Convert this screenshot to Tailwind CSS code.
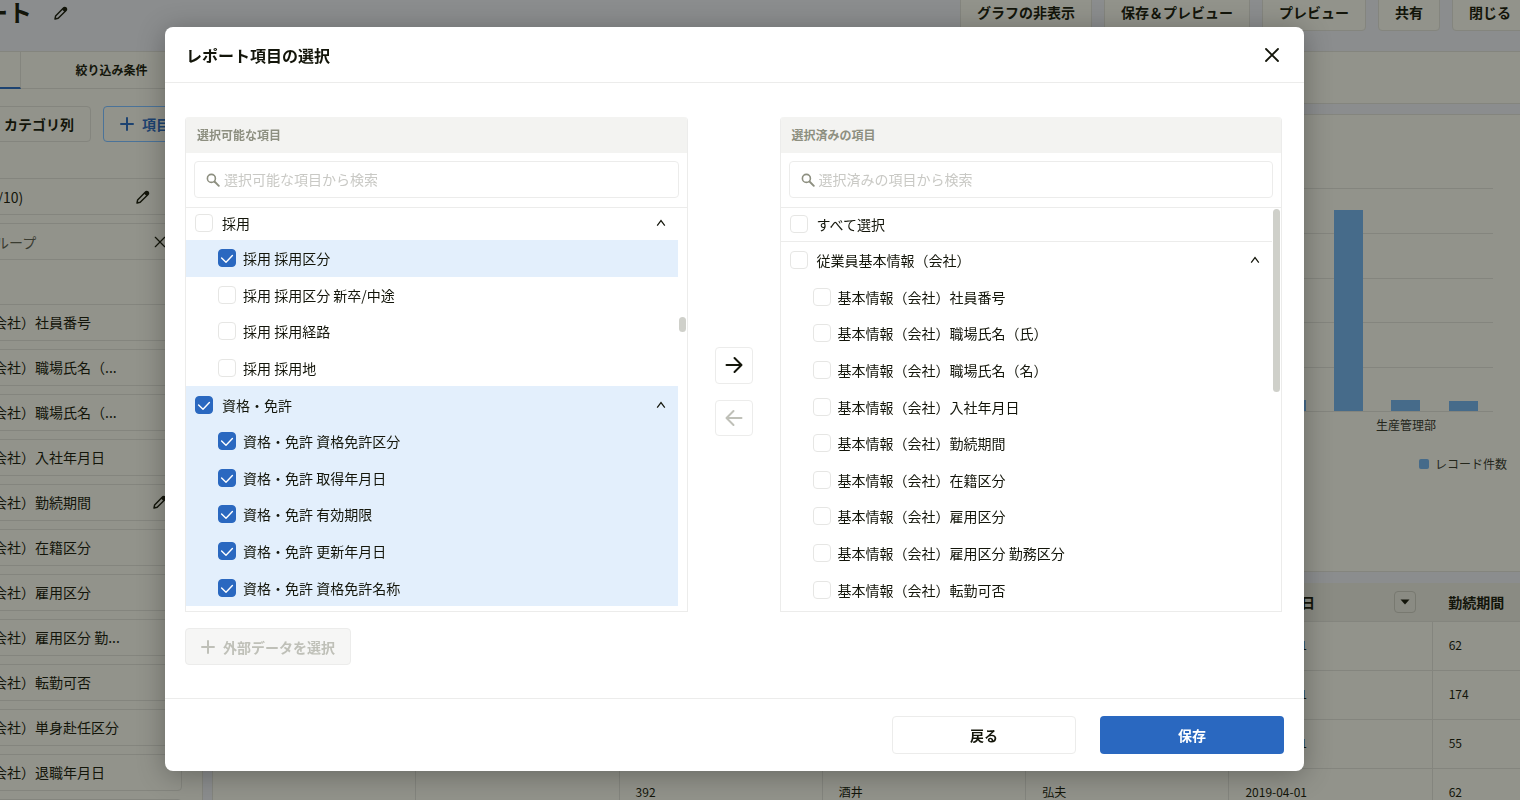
<!DOCTYPE html>
<html lang="ja">
<head>
<meta charset="utf-8">
<title>レポート項目の選択</title>
<script src="https://cdn.jsdelivr.net/npm/@tailwindcss/browser@4"></script>
</head>
<body class="h-screen overflow-hidden bg-[#8b8d8e] font-['Noto_Sans_CJK_JP',sans-serif] text-sm text-[#13150a]">

<svg class="hidden">
  <symbol id="pencil" viewBox="0 0 14 14"><path d="M1 13 L1.6 10 L9.2 2.2 Q10.6 .8 12 2 Q13.2 3.4 11.8 4.8 L4.2 12.3 Z" fill="none" stroke="currentColor" stroke-width="1.4" stroke-linejoin="round"/><path d="M8 3.4 L10 1.4 Q11.2 .6 12.3 1.7 Q13.4 2.8 12.6 4 L10.6 6 Z" fill="currentColor"/></symbol>
  <symbol id="cross" viewBox="0 0 14 14"><path d="M1 1 L13 13 M13 1 L1 13" fill="none" stroke="currentColor" stroke-width="1.8" stroke-linecap="round"/></symbol>
  <symbol id="thincross" viewBox="0 0 14 14"><path d="M1.5 1.5 L12.5 12.5 M12.5 1.5 L1.5 12.5" fill="none" stroke="currentColor" stroke-width="1.4" stroke-linecap="round"/></symbol>
  <symbol id="plus" viewBox="0 0 14 14"><path d="M7 1 V13 M1 7 H13" fill="none" stroke="currentColor" stroke-width="2" stroke-linecap="round"/></symbol>
  <symbol id="search" viewBox="0 0 14 14"><circle cx="5.4" cy="5.4" r="4" fill="none" stroke="currentColor" stroke-width="1.6"/><path d="M8.5 8.5 L12.8 12.8" stroke="currentColor" stroke-width="1.9" stroke-linecap="round"/></symbol>
  <symbol id="chevron" viewBox="0 0 10 8"><path d="M1.2 6.6 L5 1.6 L8.8 6.6" fill="none" stroke="currentColor" stroke-width="1.2"/></symbol>
  <symbol id="check" viewBox="0 0 18 18"><path d="M3.6 9 L8 13.2 L14.4 6.6" fill="none" stroke="currentColor" stroke-width="1.4" stroke-linecap="round" stroke-linejoin="round"/></symbol>
</svg>

<div class="flex h-full flex-col">
  <header class="flex h-[51px] shrink-0 items-start">
    <h1 class="-mt-2 -ml-16 text-2xl/10 font-bold whitespace-nowrap">レポート</h1>
    <button aria-label="名前を編集" class="mt-1.5 ml-[22px]"><svg class="size-3.5"><use href="#pencil"/></svg></button>
    <div class="-mt-[7px] -mr-2 ml-auto flex gap-3 font-bold whitespace-nowrap">
      <button class="h-[38px] rounded border border-[#84857e] bg-[#92938b] px-4">グラフの非表示</button>
      <button class="h-[38px] rounded border border-[#84857e] bg-[#92938b] px-4">保存＆プレビュー</button>
      <button class="h-[38px] rounded border border-[#84857e] bg-[#92938b] px-4">プレビュー</button>
      <button class="h-[38px] rounded border border-[#84857e] bg-[#92938b] px-4">共有</button>
      <button class="h-[38px] rounded border border-[#84857e] bg-[#92938b] px-4">閉じる</button>
    </div>
  </header>

  <div class="flex min-h-0 flex-1">
    <aside class="w-[203px] shrink-0 overflow-hidden border-t border-r border-[#84857e] bg-[#92938b]">
      <nav class="flex h-[37px] border-b border-[#84857e] text-xs font-bold">
        <a href="#" aria-label="項目" class="-mb-px w-[21px] border-r border-b-2 border-r-[#84857e] border-b-[#1d4371]"></a>
        <a href="#" class="flex flex-1 items-center justify-center">絞り込み条件</a>
      </nav>
      <div class="flex gap-3 pt-[17px] font-bold whitespace-nowrap">
        <button class="-ml-10 h-9 w-[131px] rounded border border-[#84857e] pr-4 text-right">カテゴリ列</button>
        <button class="flex h-9 items-center gap-2 rounded border border-[#4b7399] px-4 text-[#1d4371]"><svg class="size-3.5"><use href="#plus"/></svg>項目</button>
      </div>
      <div class="-ml-4 flex flex-col gap-2 pt-9 pr-5">
        <div class="flex h-[37px] items-center border border-[#84857e]"><span>(1/10)</span><svg class="mr-[31px] ml-auto size-3.5"><use href="#pencil"/></svg></div>
        <div class="flex h-[37px] items-center border border-[#84857e] text-[#3a3c31]"><span class="-ml-1 whitespace-nowrap">グループ</span><svg class="mr-[15px] ml-auto size-3 text-[#13150a]"><use href="#thincross"/></svg></div>
      </div>
      <ul id="fields" class="-ml-4 flex flex-col gap-2 pt-11 pr-5"></ul>
    </aside>

    <main class="ml-[9px] flex min-w-0 flex-1 flex-col overflow-hidden">
      <div class="h-[53px] shrink-0 border-y border-[#84857e] bg-[#92938b]"></div>
      <section class="mt-2.5 flex h-[458px] shrink-0 justify-end border-y border-l border-[#84857e] bg-[#92938b]">
        <svg width="1307" height="456" class="shrink-0" font-size="12" fill="#24261b">
          <g stroke="#84857e"><path d="M40 73.5H1280M40 118.5H1280M40 163.5H1280M40 207.5H1280M40 252.5H1280M40 296.5H1280"/></g>
          <g fill="#466b8a">
            <rect x="1063" y="285" width="30" height="11"/>
            <rect x="1121" y="95" width="29" height="201"/>
            <rect x="1178" y="285" width="29" height="11"/>
            <rect x="1236" y="286" width="29" height="10"/>
            <rect x="1206" y="344" width="10" height="10" rx="2"/>
          </g>
          <text x="1193" y="315" text-anchor="middle">生産管理部</text>
          <text x="1222" y="354">レコード件数</text>
        </svg>
      </section>
      <table class="mt-[11px] w-[1424px] table-fixed border-collapse bg-[#92938b] text-xs">
        <thead>
          <tr class="h-[38px] bg-[#8a8b83] text-left text-sm">
            <th></th><th></th><th></th><th></th><th></th>
            <th class="px-4"><div class="flex items-center justify-between">入社年月日<button aria-label="並べ替え" class="flex size-[22px] items-center justify-center rounded border border-[#787970]"><svg width="10" height="6"><path d="M.5 .5H9.5L5 5.5Z" fill="#13150a"/></svg></button></div></th>
            <th class="px-4">勤続期間</th>
          </tr>
        </thead>
        <tbody id="records"></tbody>
      </table>
    </main>
  </div>
</div>

<div class="fixed inset-0 flex items-start pt-[27px] pr-[216px] pl-[165px]">
  <div role="dialog" aria-labelledby="dialog-title" class="flex-1 rounded-lg bg-white text-[#13150a] shadow-[0_4px_28px_rgba(0,0,0,0.3)]">
    <div class="flex h-14 items-center justify-between border-b border-[#ececeb] pr-[25px] pl-[21px]">
      <h2 id="dialog-title" class="text-base font-bold">レポート項目の選択</h2>
      <button aria-label="閉じる"><svg class="size-3.5"><use href="#cross"/></svg></button>
    </div>

    <div class="flex pt-[34px] pr-[22px] pb-[33px] pl-5">
      <div class="flex-1">
        <section class="h-[495px] overflow-hidden rounded-t border border-t-0 border-[#ececeb]">
          <h3 class="flex h-9 items-center bg-[#f3f3f1] px-[11px] text-xs font-bold text-[#8d8f80]">選択可能な項目</h3>
          <div class="border-b border-[#ececeb] p-2 pb-[9px]">
            <label class="flex h-[37px] items-center gap-1 rounded border border-[#ececeb] px-[11px] text-[#8d8f80]">
              <svg class="size-3.5"><use href="#search"/></svg>
              <input type="text" aria-label="選択可能な項目から検索" placeholder="選択可能な項目から検索" class="flex-1 pb-0.5 outline-none placeholder:text-[#c9c9c5]">
            </label>
          </div>
          <div class="flex">
            <div id="available" class="min-w-0 flex-1"></div>
            <div class="w-[9px] pt-[109px]"><div class="ml-px h-[15px] w-[7px] rounded-full bg-[#cfd0ca]"></div></div>
          </div>
        </section>
        <button disabled class="mt-4 flex h-[37px] items-center gap-2 rounded border border-[#ececeb] bg-[#f6f6f5] px-[15px] font-bold text-[#bfc0b8]"><svg class="size-3.5"><use href="#plus"/></svg>外部データを選択</button>
      </div>

      <div class="flex w-[92px] flex-col items-center justify-center gap-4">
        <button aria-label="追加" class="flex h-[37px] w-[38px] items-center justify-center rounded border border-[#ececeb]"><svg width="18" height="18" viewBox="0 0 18 18" fill="none" stroke="#13150a" stroke-width="2" stroke-linecap="round" stroke-linejoin="round"><path d="M1.5 9H16M9.5 2L16.5 9L9.5 16"/></svg></button>
        <button disabled aria-label="削除" class="flex h-9 w-[38px] items-center justify-center rounded border border-[#ececeb]"><svg width="18" height="18" viewBox="0 0 18 18" fill="none" stroke="#bfc0b8" stroke-width="2" stroke-linecap="round" stroke-linejoin="round"><path d="M16.5 9H2M8.5 2L1.5 9L8.5 16"/></svg></button>
      </div>

      <div class="flex-1">
        <section class="h-[495px] overflow-hidden rounded-t border border-t-0 border-[#ececeb]">
          <h3 class="flex h-9 items-center bg-[#f3f3f1] px-[11px] text-xs font-bold text-[#8d8f80]">選択済みの項目</h3>
          <div class="border-b border-[#ececeb] p-2 pb-[9px]">
            <label class="flex h-[37px] items-center gap-1 rounded border border-[#ececeb] px-[11px] text-[#8d8f80]">
              <svg class="size-3.5"><use href="#search"/></svg>
              <input type="text" aria-label="選択済みの項目から検索" placeholder="選択済みの項目から検索" class="flex-1 pb-0.5 outline-none placeholder:text-[#c9c9c5]">
            </label>
          </div>
          <div class="flex">
            <div id="selected" class="min-w-0 flex-1"></div>
            <div class="w-[9px] pt-px"><div class="ml-px h-[183px] w-[7px] rounded-full bg-[#cfd0ca]"></div></div>
          </div>
        </section>
      </div>
    </div>

    <div class="flex h-[73px] items-center justify-end gap-6 border-t border-[#ececeb] pr-5 font-bold">
      <button class="h-[38px] w-[184px] rounded border border-[#ececeb]">戻る</button>
      <button class="h-[38px] w-[184px] rounded bg-[#2a68c0] text-white">保存</button>
    </div>
  </div>
</div>

<script>
const box = (on) => `<span class="grid shrink-0"><input type="checkbox" ${on ? 'checked' : ''} class="peer col-start-1 row-start-1 size-[18px] appearance-none rounded border border-[#e6e6e4] bg-white checked:border-[#2a68c0] checked:bg-[#2a68c0]"><svg class="pointer-events-none invisible col-start-1 row-start-1 size-[18px] text-white peer-checked:visible"><use href="#check"/></svg></span>`;
const chevron = '<svg class="mr-3 ml-auto h-2 w-2.5"><use href="#chevron"/></svg>';
const group = (text, on) => `<label class="flex flex-1 items-center gap-[9px] pl-[9px] ${on ? 'bg-[#e3effc]' : ''}">${box(on)}${text}${chevron}</label>`;
const item = (text, on) => `<label class="flex flex-1 items-center gap-[7px] pl-8 ${on ? 'bg-[#e3effc]' : ''}">${box(on)}${text}</label>`;

document.getElementById('available').innerHTML =
  `<div class="flex h-8 pb-[3px]">${group('採用', false)}</div><div class="flex h-[366px] flex-col">` +
  item('採用 採用区分', true) +
  ['採用 採用区分 新卒/中途', '採用 採用経路', '採用 採用地'].map(t => item(t, false)).join('') +
  group('資格・免許', true) +
  ['資格免許区分', '取得年月日', '有効期限', '更新年月日', '資格免許名称'].map(t => item('資格・免許 ' + t, true)).join('') + '</div>';

document.getElementById('selected').innerHTML =
  `<label class="flex h-[34px] items-center gap-[9px] border-b border-[#ececeb] pb-0.5 pl-[9px]">${box(false)}すべて選択</label><div class="flex h-[366px] flex-col">` +
  group('従業員基本情報（会社）', false) +
  ['社員番号', '職場氏名（氏）', '職場氏名（名）', '入社年月日', '勤続期間', '在籍区分', '雇用区分', '雇用区分 勤務区分', '転勤可否'].map(t => item('基本情報（会社）' + t, false)).join('') + '</div>';

document.getElementById('fields').innerHTML =
  ['社員番号', '職場氏名（...', '職場氏名（...', '入社年月日', '勤続期間', '在籍区分', '雇用区分', '雇用区分 勤...', '転勤可否', '単身赴任区分', '退職年月日', '退職理由']
  .map(t => `<li class="flex h-[37px] items-center rounded border border-[#84857e] pb-px"><span class="-ml-[62px] whitespace-nowrap">基本情報（会社）${t}</span>${t === '勤続期間' ? '<svg class="mr-3.5 ml-auto size-3.5"><use href="#pencil"/></svg>' : ''}</li>`).join('');

document.getElementById('records').innerHTML =
  [['', '', '', '2019-04-01', '62'], ['', '', '', '2009-12-01', '174'], ['', '', '', '2019-11-01', '55'], ['392', '酒井', '弘夫', '2019-04-01', '62']]
  .map(r => '<tr class="h-[49px]">' + ['', '', ...r].map(c => `<td class="border border-[#84857e] px-4 pb-0.5">${c}</td>`).join('') + '</tr>').join('');
</script>
</body>
</html>
